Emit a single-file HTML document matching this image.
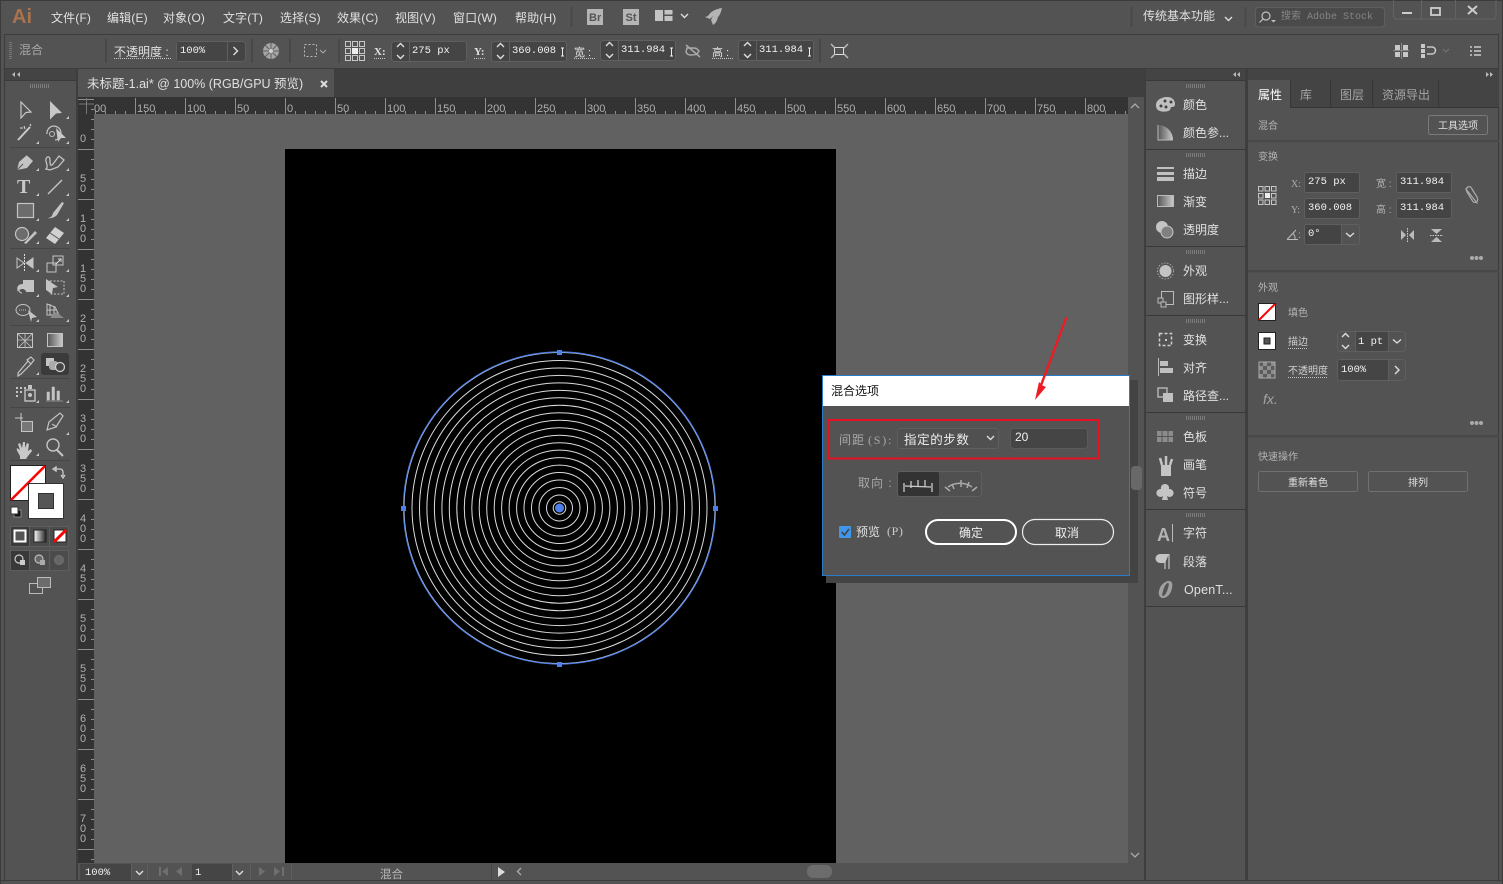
<!DOCTYPE html>
<html><head><meta charset="utf-8"><title>Illustrator</title>
<style>
html,body{margin:0;padding:0;background:#535353;width:1503px;height:884px;overflow:hidden}
svg{display:block;position:absolute;left:0;top:0}
text{font-family:"Liberation Sans","Noto Sans CJK SC",sans-serif;font-size:12px;fill:#e0e0e0}
.m{font-family:"Liberation Mono","Noto Sans CJK SC",monospace;font-size:10.5px;fill:#f2f2f2}
.s{font-size:10px;fill:#b4b4b4}
.g{fill:#a8a8a8}
.r{font-size:11px;fill:#b0b0b0}
.l{fill:none;stroke:#c0c0c0;stroke-width:1.2}
.b{fill:#444;stroke:#5f5f5f;stroke-width:1}
.d{stroke:#484848;stroke-width:2}
.sep{stroke:#464646;stroke-width:1}
.u{stroke:#c8c8c8;stroke-width:1;stroke-dasharray:1 1}
.ch{fill:none;stroke:#ddd;stroke-width:1.4}
.grip{stroke:#7c7c7c;stroke-width:5;stroke-dasharray:1 1;fill:none}
</style></head>
<body>
<svg width="1503" height="884" viewBox="0 0 1503 884" xmlns="http://www.w3.org/2000/svg">
<defs>
<pattern id="hr" x="85" y="97" width="50" height="17" patternUnits="userSpaceOnUse">
<path d="M.5 1V17M10.5 14V17M20.5 14V17M30.5 14V17M40.5 14V17" stroke="#8f8f8f" fill="none"/>
</pattern>
<pattern id="vr" x="78" y="99" width="16" height="50" patternUnits="userSpaceOnUse">
<path d="M0 .5H16M13 10.5H16M13 20.5H16M13 30.5H16M13 40.5H16" stroke="#8f8f8f" fill="none"/>
</pattern>
<pattern id="ck" x="1259" y="362" width="8" height="8" patternUnits="userSpaceOnUse">
<rect width="8" height="8" fill="#8e8e8e"/><rect width="4" height="4" fill="#5c5c5c"/><rect x="4" y="4" width="4" height="4" fill="#5c5c5c"/>
</pattern>
<linearGradient id="gr"><stop offset="0" stop-color="#555"/><stop offset="1" stop-color="#ccc"/></linearGradient>
<linearGradient id="gr2"><stop offset="0" stop-color="#fff"/><stop offset="1" stop-color="#222"/></linearGradient>
</defs>

<!-- base -->
<rect width="1503" height="884" fill="#535353"/>
<rect width="1503" height="1" fill="#3b3b3b"/>
<rect x="0" y="0" width="1" height="884" fill="#3b3b3b"/>
<rect x="1502" y="0" width="1" height="884" fill="#3b3b3b"/>
<rect x="4" y="34" width="1495" height="1" fill="#3c3c3c"/>
<rect x="4" y="68" width="1495" height="1" fill="#3c3c3c"/>
<rect x="4" y="34" width="1" height="846" fill="#3c3c3c"/>
<rect x="1498" y="34" width="1" height="846" fill="#3c3c3c"/>

<!-- title bar -->
<text x="12" y="23" style="font-size:20px;font-weight:bold;fill:#a8734e">Ai</text>
<text x="51" y="22" style="letter-spacing:.15px">文件(F)</text>
<text x="107" y="22" style="letter-spacing:.15px">编辑(E)</text>
<text x="163" y="22" style="letter-spacing:.15px">对象(O)</text>
<text x="223" y="22" style="letter-spacing:.15px">文字(T)</text>
<text x="280" y="22" style="letter-spacing:.15px">选择(S)</text>
<text x="337" y="22" style="letter-spacing:.15px">效果(C)</text>
<text x="395" y="22" style="letter-spacing:.15px">视图(V)</text>
<text x="453" y="22" style="letter-spacing:.15px">窗口(W)</text>
<text x="515" y="22" style="letter-spacing:.15px">帮助(H)</text>
<path d="M571.5 7V27" class="d"/>
<rect x="587" y="9" width="16" height="16" fill="#b5b5b5"/>
<text x="589" y="21" style="font-size:11px;font-weight:bold;fill:#555">Br</text>
<rect x="623" y="9" width="16" height="16" fill="#b5b5b5"/>
<text x="625.5" y="21" style="font-size:11px;font-weight:bold;fill:#555">St</text>
<path d="M655 10h8v11h-8zM664.5 10h8v4.5h-8zM664.5 16h8v5h-8z" fill="#c4c4c4"/>
<path d="M681 14l3.500 3.500 3.500-3.500" class="ch"/>
<path d="M722 8c-6 1-11 3-14 8l-3 1 5 2 3-3-2 4 2 5c3-2 4-4 5-8 2-2 3-5 4-9z" fill="#b4b4b4"/>
<path d="M1131.500 7V27M1245.500 7V27" class="d"/>
<text x="1143" y="20">传统基本功能</text>
<path d="M1225 17l3.500 3.500 3.500-3.500" class="ch"/>
<rect x="1255.5" y="7.5" width="129" height="19.5" rx="3" fill="#4a4a4a" stroke="#5f5f5f"/>
<circle cx="1266" cy="16" r="4" class="l"/><path d="M1263 19l-3.500 3.500" class="l"/><path d="M1271 20h5l-2.500 2.500z" fill="#c0c0c0"/>
<text x="1281" y="19" style="font-family:'Liberation Mono','Noto Sans CJK SC',monospace;font-size:10px;fill:#858585">搜索 Adobe Stock</text>
<path d="M1393.5 0V16a3 3 0 0 0 3 3H1493a3 3 0 0 0 3-3V0M1421.500 0V19M1455.500 0V19" fill="none" stroke="#636363"/>
<rect x="1402" y="12" width="10" height="2" fill="#ccc"/>
<rect x="1431" y="8" width="9" height="7" fill="none" stroke="#ccc" stroke-width="1.8"/>
<path d="M1468 6l9 8M1477 6l-9 8" stroke="#ccc" stroke-width="2"/>

<!-- control bar -->
<path d="M10.5 42V60" stroke="#777" stroke-width="3" stroke-dasharray="1 1"/>
<text x="19" y="54" class="g">混合</text>
<path d="M106 39V63M252 39V63M290 39V63M339 39V63M820 39V63" class="d"/>
<text x="114" y="56">不透明度 :</text><path d="M114 58.5H171" class="u"/>
<rect x="176.5" y="41.5" width="69" height="20" rx="3" class="b"/><rect x="177" y="42" width="50" height="19" fill="#454545"/>
<path d="M227.5 42V61" stroke="#5f5f5f"/><text x="180" y="53" class="m">100%</text>
<path d="M233.5 47l4 4-4 4" class="ch"/>
<circle cx="271" cy="51" r="8" fill="#a5a5a5"/><path d="M271 43V59M263 51H279M265 45l12 12M277 45l-12 12" stroke="#5f5f5f"/><circle cx="271" cy="51" r="2" fill="#d0d0d0"/>
<rect x="304.5" y="44.5" width="12" height="12" fill="none" stroke="#bbb" stroke-dasharray="2 2"/>
<path d="M320 50l3 3 3-3" fill="none" stroke="#aaa"/>
<g fill="none" stroke="#c8c8c8"><rect x="345.5" y="41.5" width="5" height="5"/><rect x="352.5" y="41.5" width="5" height="5"/><rect x="359.5" y="41.5" width="5" height="5"/><rect x="345.5" y="48.5" width="5" height="5"/><rect x="359.5" y="48.5" width="5" height="5"/><rect x="345.5" y="55.5" width="5" height="5"/><rect x="352.5" y="55.5" width="5" height="5"/><rect x="359.5" y="55.5" width="5" height="5"/></g><rect x="352" y="48" width="6" height="6" fill="#eee"/>
<text x="374" y="55" style="font-family:'Liberation Serif';font-weight:bold;font-size:11px">X:</text><path d="M374 58.5H385" class="u"/>
<text x="474" y="55" style="font-family:'Liberation Serif';font-weight:bold;font-size:11px">Y:</text><path d="M474 58.5H485" class="u"/>
<text x="574" y="56" style="font-size:11px">宽 :</text><path d="M574 58.5H595" class="u"/>
<text x="712" y="56" style="font-size:11px">高 :</text><path d="M712 58.5H733" class="u"/>

<rect x="391.5" y="41.5" width="75" height="20" rx="3" class="b"/><rect x="409.5" y="42" width="56" height="19" fill="#454545"/><path d="M409.5 42V61" stroke="#5f5f5f"/>
<path d="M397 47l3.500-3.500 3.500 3.500M397 55l3.500 3.500 3.500-3.500" class="ch"/><text x="412" y="53" class="m">275 px</text>
<rect x="491.5" y="41.5" width="75" height="20" rx="3" class="b"/><rect x="509.5" y="42" width="56" height="19" fill="#454545"/><path d="M509.5 42V61" stroke="#5f5f5f"/>
<path d="M497 47l3.500-3.500 3.500 3.500M497 55l3.500 3.500 3.500-3.500" class="ch"/><text x="512" y="53" class="m">360.008</text>
<path d="M562.5 48V56M561 48h3M561 56h3" stroke="#eee"/>
<rect x="600.5" y="40.5" width="75" height="20" rx="3" class="b"/><rect x="618.5" y="41" width="56" height="19" fill="#454545"/><path d="M618.5 41V60" stroke="#5f5f5f"/>
<path d="M606 46l3.500-3.500 3.500 3.500M606 54l3.500 3.500 3.500-3.500" class="ch"/><text x="621" y="52" class="m">311.984</text>
<path d="M671.5 48V56M670 48h3M670 56h3" stroke="#eee"/>
<rect x="738.5" y="40.5" width="75" height="20" rx="3" class="b"/><rect x="756.5" y="41" width="56" height="19" fill="#454545"/><path d="M756.5 41V60" stroke="#5f5f5f"/>
<path d="M744 46l3.500-3.500 3.500 3.500M744 54l3.500 3.500 3.500-3.500" class="ch"/><text x="759" y="52" class="m">311.984</text>
<path d="M809.5 48V56M808 48h3M808 56h3" stroke="#eee"/>
<path d="M687 48h5c3 0 4 0 5 1l2 2-2 3c-2 1-3 1-6 1-3 0-4-1-5-3zM686 45l14 12" fill="none" stroke="#aaa" stroke-width="1.500"/>
<rect x="834.5" y="47.5" width="9" height="7" fill="none" stroke="#ddd"/>
<path d="M831 44l4 4M848 44l-4 4M831 58l4-4M848 58l-4-4" stroke="#bbb" stroke-width="1.500"/>
<path d="M1395 45h5v5h-5zM1403 45h5v5h-5zM1395 52h5v5h-5zM1403 52h5v5h-5z" fill="#c8c8c8"/><path d="M1401.5 43V59M1393 50.5H1409" stroke="#888"/>
<path d="M1421 44h4v4h-4zM1421 49h4v4h-4zM1421 54h4v4h-4z" fill="#c8c8c8"/><path d="M1427 47h5a3 3 0 0 1 0 7h-5" fill="none" stroke="#c8c8c8" stroke-width="1.500"/>
<path d="M1443 49l3 3 3-3" fill="none" stroke="#777"/>
<path d="M1470 47h2M1470 51h2M1470 55h2M1474 47h7M1474 51h7M1474 55h7" stroke="#ccc" stroke-width="1.500"/>

<!-- tab row -->
<rect x="5" y="69" width="71" height="12" fill="#444"/>
<rect x="78" y="69" width="1066" height="28" fill="#3f3f3f"/>
<rect x="78" y="69" width="256" height="28" fill="#535353"/>
<text x="87" y="88" style="font-size:12.5px">未标题-1.ai* @ 100% (RGB/GPU 预览)</text>
<path d="M321 81l6 6M327 81l-6 6" stroke="#ddd" stroke-width="2"/>
<path d="M15 72l-3 2.500 3 2.500zM20 72l-3 2.500 3 2.500z" fill="#bbb"/>
<rect x="4" y="80" width="72" height="1" fill="#3a3a3a"/>
<rect x="76" y="69" width="2" height="811" fill="#3e3e3e"/>

<!-- canvas -->
<rect x="94" y="114" width="1034" height="749" fill="#616161"/>
<rect x="285" y="149" width="551" height="714" fill="#000"/>

<!-- rulers -->
<rect x="78" y="97" width="1050" height="17" fill="#333"/>
<rect x="94" y="97" width="1034" height="17" fill="url(#hr)"/>
<rect x="78" y="97" width="16" height="766" fill="#333"/>
<rect x="78" y="99" width="16" height="764" fill="url(#vr)"/>
<path d="M79 104H94M86.5 98V114" stroke="#777"/>
<text class="r" x="94" y="112">00</text><text class="r" x="137" y="112">150</text><text class="r" x="187" y="112">100</text><text class="r" x="237" y="112">50</text><text class="r" x="287" y="112">0</text><text class="r" x="337" y="112">50</text><text class="r" x="387" y="112">100</text><text class="r" x="437" y="112">150</text><text class="r" x="487" y="112">200</text><text class="r" x="537" y="112">250</text><text class="r" x="587" y="112">300</text><text class="r" x="637" y="112">350</text><text class="r" x="687" y="112">400</text><text class="r" x="737" y="112">450</text><text class="r" x="787" y="112">500</text><text class="r" x="837" y="112">550</text><text class="r" x="887" y="112">600</text><text class="r" x="937" y="112">650</text><text class="r" x="987" y="112">700</text><text class="r" x="1037" y="112">750</text><text class="r" x="1087" y="112">800</text>
<text class="r" x="80" y="142">0</text>
<text class="r" x="80 80" y="182 192">50</text>
<text class="r" x="80 80 80" y="222 232 242">100</text>
<text class="r" x="80 80 80" y="272 282 292">150</text>
<text class="r" x="80 80 80" y="322 332 342">200</text>
<text class="r" x="80 80 80" y="372 382 392">250</text>
<text class="r" x="80 80 80" y="422 432 442">300</text>
<text class="r" x="80 80 80" y="472 482 492">350</text>
<text class="r" x="80 80 80" y="522 532 542">400</text>
<text class="r" x="80 80 80" y="572 582 592">450</text>
<text class="r" x="80 80 80" y="622 632 642">500</text>
<text class="r" x="80 80 80" y="672 682 692">550</text>
<text class="r" x="80 80 80" y="722 732 742">600</text>
<text class="r" x="80 80 80" y="772 782 792">650</text>
<text class="r" x="80 80 80" y="822 832 842">700</text>

<!-- rings -->
<g fill="none" stroke="#dcdcdc" stroke-width="1">
<circle cx="559.5" cy="508" r="155.500"/>
<circle cx="559.5" cy="508" r="147.500"/><circle cx="559.5" cy="508" r="140"/><circle cx="559.5" cy="508" r="132.600"/><circle cx="559.5" cy="508" r="125.100"/><circle cx="559.5" cy="508" r="117.600"/><circle cx="559.5" cy="508" r="110.200"/><circle cx="559.5" cy="508" r="102.700"/><circle cx="559.5" cy="508" r="95.200"/><circle cx="559.5" cy="508" r="87.700"/><circle cx="559.5" cy="508" r="80.300"/><circle cx="559.5" cy="508" r="72.800"/><circle cx="559.5" cy="508" r="65.300"/><circle cx="559.5" cy="508" r="57.900"/><circle cx="559.5" cy="508" r="50.400"/><circle cx="559.5" cy="508" r="42.900"/><circle cx="559.5" cy="508" r="35.500"/><circle cx="559.5" cy="508" r="28"/><circle cx="559.5" cy="508" r="20.500"/><circle cx="559.5" cy="508" r="13"/><circle cx="559.5" cy="508" r="6.300"/>
</g>
<circle cx="559.5" cy="508" r="156" fill="none" stroke="#4f80e8" stroke-width="1.200"/>
<circle cx="559.5" cy="508" r="4.500" fill="#4f80e8"/>
<g fill="#4f80e8"><rect x="557" y="350" width="5" height="5"/><rect x="557" y="662" width="5" height="5"/><rect x="401" y="506" width="5" height="5"/><rect x="713" y="506" width="5" height="5"/></g>

<!-- scroll v -->
<rect x="1128" y="97" width="16" height="766" fill="#535353"/>
<path d="M1131 108l4-4 4 4M1131 853l4 4 4-4" fill="none" stroke="#aaa" stroke-width="1.300"/>
<rect x="1144" y="69" width="2" height="811" fill="#3e3e3e"/>

<!-- tools panel -->
<path d="M30 86H49" class="grip" style="stroke-width:4"/>
<path d="M10 147.5H70M10 248.5H70M10 325.5H70M10 378.5H70M10 407.5H70M10 460.5H70" class="sep"/>
<path d="M21 102l10 10-5 .5-5 5.500z" fill="none" stroke="#c8c8c8" stroke-width="1.200"/>
<path d="M50 101l12 12-6 .5-6 6z" fill="#c8c8c8"/>
<path d="M18 140l12-13" stroke="#c8c8c8" stroke-width="2"/><path d="M24 126l1 3M20 128h3M30 124l1 2" stroke="#ddd"/>
<path d="M47 134a7 7 0 1 1 8 6" fill="none" stroke="#c0c0c0" stroke-width="1.300"/><path d="M56 128l10 10-5 0-3 4z" fill="#c8c8c8"/><circle cx="52" cy="134" r="2.500" fill="none" stroke="#c0c0c0"/>
<path d="M17 170l2-8 8-7 6 6-6 7z" fill="#c4c4c4"/><path d="M17 170l6-6" stroke="#555"/><path d="M26 154l7 6" stroke="#535353"/>
<path d="M46 169c3-3-1-7 0-10s4-3 4 1 0 7 3 4l6-8 5 4-6 7-8 3z" fill="none" stroke="#c4c4c4" stroke-width="1.300"/>
<text x="17" y="193" style="font-family:'Liberation Serif';font-size:20px;font-weight:bold;fill:#c8c8c8">T</text>
<path d="M48 194l14-14" stroke="#c4c4c4" stroke-width="1.400"/>
<rect x="17.5" y="203.5" width="16" height="14" fill="#6c6c6c" stroke="#c4c4c4" stroke-width="1.200"/>
<path d="M47 218c3 0 5-1 6-5l9-11 2 1-7 12c-2 2-6 4-10 3z" fill="#c4c4c4"/>
<circle cx="22" cy="234" r="6.500" fill="#6c6c6c" stroke="#c4c4c4" stroke-width="1.200"/><path d="M24 243l11-12 2 2-11 11z" fill="#c4c4c4"/>
<path d="M46 238l9-11 9 6-9 11z" fill="#d0d0d0"/><path d="M50 233l9 6" stroke="#555"/>
<path d="M17 258l7 5-7 5zM33 258l-7 5 7 5z" fill="none" stroke="#c4c4c4"/><path d="M33 258v10l-7-5z" fill="#c4c4c4"/><path d="M24.5 254v18" stroke="#ddd" stroke-dasharray="2 1"/>
<rect x="47" y="263" width="9" height="9" fill="none" stroke="#c4c4c4"/><rect x="53" y="256" width="10" height="9" fill="none" stroke="#c4c4c4"/><path d="M56 264l5-5M58 259h3v3" stroke="#ddd"/>
<path d="M23 280h11v12H26c0-4-7-4-8 0-2-5 0-8 5-8z" fill="#c4c4c4"/><path d="M22 293a3 3 0 1 1 3-3" fill="none" stroke="#c4c4c4"/>
<rect x="50" y="281" width="14" height="13" fill="none" stroke="#c4c4c4" stroke-dasharray="2 1.500"/><path d="M46 279l12 8-5 1-1 6-6-4z" fill="#c4c4c4"/>
<ellipse cx="23" cy="310" rx="7" ry="5.500" fill="none" stroke="#c4c4c4"/><path d="M28 310l9 7-5 1-1 4z" fill="#c4c4c4"/><path d="M19 310h7" stroke="#c4c4c4" stroke-dasharray="1 1"/>
<path d="M47 304l8 3 4 8H47zM50 304v11M54 306v9M47 310h10" fill="none" stroke="#c4c4c4"/><path d="M50 318l6-6 8 6z" fill="#8a8a8a"/>
<rect x="17.5" y="333.5" width="15" height="14" fill="none" stroke="#c4c4c4"/><path d="M18 340h14M25 334v14M18 334l14 14M32 334l-14 14" stroke="#c4c4c4" stroke-width=".8"/>
<rect x="47.5" y="333.5" width="15" height="13" fill="url(#gr)" stroke="#c4c4c4"/>
<rect x="41" y="353" width="28" height="22" rx="3" fill="#3b3b3b"/>
<path d="M18 373l10-12 3 3-10 10-3 2zM27 360l4-3 3 3-3 4z" fill="none" stroke="#c4c4c4" stroke-width="1.200"/>
<rect x="46" y="358" width="8" height="8" fill="#c4c4c4"/><rect x="49" y="361" width="9" height="9" rx="3" fill="#aaa"/><circle cx="60" cy="367" r="4.500" fill="#444" stroke="#ccc" stroke-width="1.300"/>
<path d="M16 387h2v2h-2zM20 387h2v2h-2zM24 387h2v2h-2zM16 391h2v2h-2zM20 391h2v2h-2zM16 395h2v2h-2z" fill="#c4c4c4"/><rect x="25" y="390" width="10" height="11" fill="none" stroke="#c4c4c4" stroke-width="1.400"/><rect x="28" y="385" width="4" height="4" fill="#c4c4c4"/><circle cx="30" cy="395" r="2" fill="#c4c4c4"/>
<path d="M47 400v-8h2.500v8zM52 400v-13h2.500v13zM57 400v-9h2.500v9zM46 401H63" fill="#c4c4c4" stroke="#c4c4c4" stroke-width=".5"/>
<rect x="21.5" y="421.5" width="11" height="10" fill="#777" stroke="#c4c4c4"/><path d="M15 418h8M21 413v8" stroke="#c4c4c4"/>
<path d="M47 430l2-8 11-9 3 3-7 11zM52 424l5 3" fill="none" stroke="#c4c4c4" stroke-width="1.200"/>
<path d="M20 456c-2-4-4-6-3-8l3 2-2-6 2-1 2 5 1-6h2l0 6 2-5 2 1-1 7 3-2 1 2-4 5-2 3h-6z" fill="#c8c8c8"/>
<circle cx="53" cy="445" r="6" fill="none" stroke="#c4c4c4" stroke-width="1.400"/><path d="M57 450l6 6" stroke="#c4c4c4" stroke-width="2"/>
<path fill="#c8c8c8" d="M66 119h3v-3zM36 144h3v-3zM66 144h3v-3zM36 171h3v-3zM66 171h3v-3zM36 196h3v-3zM66 196h3v-3zM36 221h3v-3zM66 221h3v-3zM36 244h3v-3zM66 244h3v-3zM36 272h3v-3zM66 272h3v-3zM36 297h3v-3zM66 297h3v-3zM36 322h3v-3zM66 322h3v-3zM36 375h3v-3zM36 403h3v-3zM66 403h3v-3zM66 435h3v-3zM36 456h3v-3z"/>

<!-- colour swatches -->
<rect x="10.5" y="465.5" width="35" height="35" fill="#fff" stroke="#222"/>
<path d="M11 500L45 466" stroke="#f00" stroke-width="2.500"/>
<rect x="28.5" y="483.5" width="35" height="35" fill="#fff" stroke="#333"/>
<rect x="38.5" y="493.500" width="15" height="15" fill="#565656" stroke="#333"/>
<path d="M55 469h5a3 3 0 0 1 3 3v4M53 469l3-2v4zM61 475l2 3 2-3" fill="none" stroke="#ccc" stroke-width="1.300"/>
<rect x="14" y="510" width="7" height="7" fill="#111" stroke="#888"/><rect x="11" y="507" width="7" height="7" fill="#fff" stroke="#333"/>
<rect x="10.5" y="526.500" width="58" height="20" fill="#4b4b4b" stroke="#5e5e5e"/><rect x="11" y="527" width="18" height="19" fill="#3a3a3a"/>
<rect x="14.5" y="530.500" width="11" height="11" fill="#555" stroke="#fff" stroke-width="2"/>
<rect x="34" y="530" width="12" height="12" fill="url(#gr2)" stroke="#222"/>
<rect x="54" y="530" width="12" height="12" fill="#fff" stroke="#222"/><path d="M54 542l12-12" stroke="#f00" stroke-width="3"/>
<path d="M29.5 527V546M49.5 527V546" stroke="#5e5e5e"/>
<rect x="10.5" y="550.500" width="58" height="20" fill="#4b4b4b" stroke="#5e5e5e"/><rect x="11" y="551" width="18" height="19" fill="#393939"/>
<circle cx="19" cy="559" r="4" fill="none" stroke="#ccc" stroke-width="1.200"/><rect x="20" y="560" width="5" height="5" fill="#ccc"/>
<circle cx="39" cy="559" r="4" fill="#666" stroke="#bbb" stroke-width="1.200"/><rect x="40" y="560" width="5" height="5" fill="#aaa"/>
<circle cx="59" cy="560" r="4.500" fill="#666" stroke="#707070"/>
<path d="M29.5 551V570M49.5 551V570" stroke="#5e5e5e"/>
<rect x="29.5" y="583.500" width="13" height="10" fill="none" stroke="#bbb"/><rect x="37.5" y="577.500" width="13" height="10" fill="#6c6c6c" stroke="#bbb"/>

<!-- status bar -->
<rect x="78" y="863" width="1066" height="17" fill="#535353"/>
<rect x="80" y="864" width="52" height="16" fill="#454545"/>
<text x="85" y="875" class="m">100%</text>
<path d="M136 871l3.500 3.500 3.500-3.500" class="ch"/>
<path d="M131.5 864V880M147.5 864V880M192.5 864V880M232.5 864V880M250.5 864V880M291.5 864V880" stroke="#5f5f5f"/>
<path d="M159 867v9h2v-9zM168 867l-6 4.500 6 4.500zM182 867l-6 4.500 6 4.500z" fill="#6f6f6f"/>
<rect x="192" y="864" width="40" height="16" fill="#454545"/>
<text x="195" y="875" class="m">1</text>
<path d="M236 871l3.500 3.500 3.500-3.500" class="ch"/>
<path d="M259 867l6 4.500-6 4.500zM274 867l6 4.500-6 4.500zM282 867v9h2v-9z" fill="#6f6f6f"/>
<text x="380" y="878" style="font-size:11.500px;fill:#b8b8b8">混合</text>
<rect x="491" y="864" width="1" height="16" fill="#464646"/>
<path d="M498 867l7 5-7 5z" fill="#ddd"/>
<path d="M521 868l-3.500 3.500 3.500 3.500" fill="none" stroke="#aaa" stroke-width="1.300"/>
<rect x="807" y="865" width="25" height="13" rx="6" fill="#6c6c6c"/>
<rect x="0" y="880" width="1503" height="1" fill="#3c3c3c"/>

<!-- dock -->
<rect x="1146" y="69" width="353" height="11" fill="#444"/>
<path d="M1236 72l-3 2.500 3 2.500zM1240 72l-3 2.500 3 2.500z" fill="#bbb"/>
<path d="M1486 72l3 2.500-3 2.500zM1490 72l3 2.500-3 2.500z" fill="#bbb"/>
<rect x="1146" y="80" width="100" height="800" fill="#535353"/>
<rect x="1245" y="69" width="3" height="811" fill="#3e3e3e"/>
<path d="M1146 80.5H1245M1146 149.5H1245M1146 246.5H1245M1146 315.5H1245M1146 412.5H1245M1146 509.5H1245M1146 606.5H1245" stroke="#383838"/>
<path d="M1186 86H1205M1186 155H1205M1186 252H1205M1186 321H1205M1186 418H1205M1186 515H1205" class="grip" style="stroke-width:4"/>
<text x="1183" y="109">颜色</text><text x="1183" y="137">颜色参...</text><text x="1183" y="178">描边</text><text x="1183" y="206">渐变</text><text x="1183" y="234">透明度</text><text x="1183" y="275">外观</text><text x="1183" y="303">图形样...</text><text x="1183" y="344">变换</text><text x="1183" y="372">对齐</text><text x="1183" y="400">路径查...</text><text x="1183" y="441">色板</text><text x="1183" y="469">画笔</text><text x="1183" y="497">符号</text><text x="1183" y="537">字符</text><text x="1183" y="566">段落</text><text x="1184" y="594" style="font-size:12.5px;letter-spacing:.2px">OpenT...</text>
<path d="M1156 105c0-5 6-8 11-8 5 0 8 3 8 7 0 3-2 3-4 3l-1 3c-2 2-8 2-10 1-3-1-4-3-4-6z" fill="#c0c0c0"/><circle cx="1161" cy="106" r="1.500" fill="#444"/><circle cx="1166" cy="107" r="1.500" fill="#444"/><circle cx="1165" cy="101" r="1.500" fill="#444"/><circle cx="1171" cy="102" r="1.500" fill="#444"/>
<path d="M1158 125a15 15 0 0 1 15 15h-15z" fill="url(#gr)"/><path d="M1158 125v15h15" fill="none" stroke="#bbb"/>
<path d="M1157 167h17v2h-17zM1157 172h17v3h-17zM1157 177h17v4h-17z" fill="#c0c0c0"/>
<rect x="1157.5" y="195.500" width="16" height="11" fill="url(#gr)" stroke="#bbb"/>
<circle cx="1162" cy="227" r="6" fill="#c4c4c4"/><circle cx="1167" cy="232" r="6" fill="#808080" stroke="#c4c4c4"/>
<circle cx="1165.5" cy="271" r="8" fill="none" stroke="#aaa" stroke-dasharray="1.500 1.500"/><circle cx="1165.5" cy="271" r="6" fill="#c4c4c4"/>
<rect x="1161.5" y="291.500" width="12" height="13" fill="none" stroke="#bbb"/><rect x="1158" y="298" width="5" height="5" fill="#535353" stroke="#bbb"/><rect x="1161" y="302" width="5" height="5" fill="#535353" stroke="#bbb"/>
<rect x="1159.5" y="333.500" width="12" height="12" fill="none" stroke="#d0d0d0" stroke-width="1.500" stroke-dasharray="3 2"/><rect x="1165" y="339" width="2" height="2" fill="#ccc"/>
<path d="M1158.5 358V376" stroke="#bbb"/><path d="M1160 361h8v5h-8zM1160 368h13v5h-13z" fill="#c0c0c0"/>
<rect x="1158" y="388" width="9" height="9" fill="none" stroke="#c0c0c0" stroke-width="1.300"/><rect x="1163" y="393" width="10" height="9" fill="#c0c0c0"/>
<path d="M1157 431h16v11h-16z" fill="#8c8c8c"/><path d="M1162 431v11M1168 431v11M1157 436.5h16" stroke="#535353"/>
<path d="M1161 465h10v11h-10z" fill="#c4c4c4"/><path d="M1162 465l-2-7M1166 465v-9M1170 465l2-6" fill="none" stroke="#c4c4c4" stroke-width="2.500"/>
<path d="M1165 484a4 4 0 0 1 4 5 4 4 0 1 1-2 7l1 4h-6l1-4a4 4 0 1 1-2-7 4 4 0 0 1 4-5z" fill="#c4c4c4"/>
<text x="1157" y="541" style="font-size:18px;font-weight:bold;fill:#b4b4b4">A</text><path d="M1172.5 524V542" stroke="#bbb"/>
<path d="M1165 554v15M1169 554v15" stroke="#bbb" stroke-width="1.300"/><path d="M1169 554h-9a4 4 0 0 0 0 9h5z" fill="#c4c4c4"/>
<path fill-rule="evenodd" d="M1169 581c3 0 4 3 3 7-1 6-5 10-9 10-3 0-5-3-4-7 1-6 6-10 10-10zM1168 583c-2 0-4 4-5 8-1 3-1 5 0 5 2 0 4-4 5-8 1-3 1-5 0-5z" fill="#a0a0a0"/>

<!-- right panel -->
<rect x="1248" y="80" width="251" height="28" fill="#444"/>
<rect x="1248" y="80" width="42" height="28" fill="#535353"/>
<path d="M1290.5 80V108M1330.5 80V107M1372.5 80V107M1438.5 80V107" stroke="#363636"/>
<path d="M1290 107.5H1499" stroke="#363636"/>
<text x="1258" y="99" style="fill:#fff">属性</text>
<text x="1300" y="99" style="fill:#a5a5a5">库</text>
<text x="1340" y="99" style="fill:#a5a5a5">图层</text>
<text x="1382" y="99" style="fill:#a5a5a5">资源导出</text>
<text x="1258" y="129" class="s">混合</text>
<rect x="1428.5" y="115.500" width="59" height="19" rx="2" fill="none" stroke="#7a7a7a"/>
<text x="1438" y="129" class="s" style="fill:#e0e0e0">工具选项</text>
<rect x="1248" y="140" width="251" height="2" fill="#484848"/>
<text x="1258" y="160" class="s">变换</text>
<g fill="none" stroke="#c8c8c8"><rect x="1258.5" y="186.500" width="4.500" height="4.500"/><rect x="1265" y="186.500" width="4.500" height="4.500"/><rect x="1271.5" y="186.500" width="4.500" height="4.500"/><rect x="1258.5" y="193.500" width="4.500" height="4.500"/><rect x="1271.5" y="193.500" width="4.500" height="4.500"/><rect x="1258.5" y="200" width="4.500" height="4.500"/><rect x="1265" y="200" width="4.500" height="4.500"/><rect x="1271.5" y="200" width="4.500" height="4.500"/></g><rect x="1265" y="193" width="5" height="5" fill="#eee"/>
<text x="1291" y="187" style="font-family:'Liberation Serif';font-size:10px;fill:#aaa">X:</text>
<text x="1291" y="213" style="font-family:'Liberation Serif';font-size:10px;fill:#aaa">Y:</text>
<text x="1376" y="187" class="s">宽 :</text>
<text x="1376" y="213" class="s">高 :</text>
<rect x="1304.5" y="172.500" width="55" height="20" rx="2" class="b"/><text x="1308" y="184" class="m">275 px</text>
<rect x="1304.5" y="198.500" width="55" height="20" rx="2" class="b"/><text x="1308" y="210" class="m">360.008</text>
<rect x="1396.5" y="172.500" width="55" height="20" rx="2" class="b"/><text x="1400" y="184" class="m">311.984</text>
<rect x="1396.5" y="198.500" width="55" height="20" rx="2" class="b"/><text x="1400" y="210" class="m">311.984</text>
<path d="M1287 239.500H1298M1287 239.500L1296 230M1293 233.500a7 7 0 0 1 2 6" fill="none" stroke="#bbb"/><text x="1298" y="238" class="s">:</text>
<rect x="1304.5" y="224.500" width="55" height="20" rx="2" class="b"/><path d="M1341.5 225V244" stroke="#5f5f5f"/><rect x="1342" y="225" width="17" height="19" fill="#535353"/>
<text x="1308" y="236" class="m">0°</text><path d="M1346 233l4 3.500 4-3.500" class="ch"/>
<path d="M1465.5 188.500l12 15M1468 187c2-1 3 0 4 2l5 8c1 2 1 4-1 5s-3 0-4-2l-5-8c-1-2-1-4 1-5z" fill="none" stroke="#a8a8a8" stroke-width="1.300"/>
<path d="M1401 230l5 5-5 5zM1414 230l-5 5 5 5z" fill="#bbb"/><path d="M1407.5 228V242" stroke="#ccc" stroke-dasharray="1.500 1"/>
<path d="M1431 229h11l-5.500 5zM1431 242h11l-5.500-5z" fill="#bbb"/><path d="M1430 235.500H1443" stroke="#ccc" stroke-dasharray="1.500 1"/>
<circle cx="1472" cy="258" r="2" fill="#aaa"/><circle cx="1476.5" cy="258" r="2" fill="#aaa"/><circle cx="1481" cy="258" r="2" fill="#aaa"/>
<rect x="1248" y="270" width="251" height="2.500" fill="#484848"/>
<text x="1258" y="291" class="s">外观</text>
<rect x="1258.5" y="303.500" width="17" height="17" fill="#fff" stroke="#222"/><path d="M1259 320l16-16" stroke="#f00" stroke-width="2"/>
<text x="1288" y="316" class="s">填色</text>
<rect x="1258.5" y="332.500" width="17" height="17" fill="#fff" stroke="#222"/><rect x="1264" y="338" width="6" height="6" fill="#555" stroke="#222"/>
<text x="1288" y="345" class="s" style="fill:#d0d0d0">描边</text><path d="M1288 348.5H1308" class="u"/>
<rect x="1337.5" y="331.500" width="68" height="20" rx="3" fill="#535353" stroke="#5f5f5f"/><rect x="1355" y="332" width="33" height="19" fill="#454545"/><path d="M1355.5 332V351M1388.5 332V351" stroke="#5f5f5f"/>
<path d="M1342 337l3.500-3.500 3.500 3.500M1342 345l3.500 3.500 3.500-3.500" class="ch"/><text x="1358" y="344" class="m">1 pt</text>
<path d="M1393 339.5l4 3.500 4-3.500" class="ch"/>
<rect x="1259" y="362" width="16" height="16" fill="url(#ck)" stroke="#aaa"/>
<text x="1288" y="374" class="s" style="fill:#d0d0d0">不透明度</text><path d="M1288 377.5H1328" class="u"/>
<rect x="1337.5" y="359.500" width="68" height="21" rx="3" fill="#535353" stroke="#5f5f5f"/><rect x="1338" y="360" width="50" height="20" rx="2" fill="#454545"/><path d="M1388.5 360V380" stroke="#5f5f5f"/>
<text x="1341" y="372" class="m">100%</text><path d="M1395 366l4 4-4 4" class="ch"/>
<text x="1263" y="404" style="font-family:'Liberation Sans';font-style:italic;font-size:14px;fill:#a5a5a5">fx.</text>
<circle cx="1472" cy="423" r="2" fill="#aaa"/><circle cx="1476.5" cy="423" r="2" fill="#aaa"/><circle cx="1481" cy="423" r="2" fill="#aaa"/>
<rect x="1248" y="435" width="251" height="2.500" fill="#484848"/>
<text x="1258" y="460" class="s">快速操作</text>
<rect x="1258.5" y="471.500" width="99" height="20" rx="2" fill="none" stroke="#707070"/>
<rect x="1368.5" y="471.500" width="99" height="20" rx="2" fill="none" stroke="#707070"/>
<text x="1288" y="486" class="s" style="fill:#e0e0e0">重新着色</text>
<text x="1408" y="486" class="s" style="fill:#e0e0e0">排列</text>

<!-- dialog -->
<rect x="826" y="380" width="312" height="203" fill="#434343"/>
<rect x="1131" y="466" width="11" height="24" rx="4" fill="#686868"/>
<rect x="822.5" y="375.500" width="307" height="200" fill="#535353" stroke="#2a7cc8"/>
<rect x="823" y="376" width="306" height="30" fill="#fff"/>
<text x="831" y="395" style="fill:#111">混合选项</text>
<path d="M1066.5 317L1040 388" stroke="#ed1c24" stroke-width="2.400" fill="none"/>
<path d="M1035 400l4-18 3.500 3.500 3.500 1.500z" fill="#ed1c24"/>
<rect x="828.5" y="420" width="269.500" height="38.500" fill="none" stroke="#e81123" stroke-width="2"/>
<text x="839" y="444" style="fill:#a8a8a8;letter-spacing:1px">间距</text><text x="868" y="444" style="font-family:'Liberation Serif','Noto Sans CJK SC';fill:#a8a8a8;letter-spacing:1.800px">(S):</text>
<rect x="897.5" y="428.500" width="101" height="20" rx="3" fill="#505050" stroke="#5f5f5f"/>
<text x="904" y="444" style="font-size:12.5px;fill:#eee;letter-spacing:.6px">指定的步数</text>
<path d="M987 436l3.500 3.500 3.500-3.500" class="ch"/>
<rect x="1010.5" y="428.500" width="77" height="20" rx="3" fill="#454545" stroke="#5a5a5a"/>
<text x="1015" y="441" style="font-size:12px;fill:#f2f2f2">20</text>
<text x="858" y="487" style="fill:#a8a8a8;letter-spacing:1px">取向 :</text>
<rect x="897.5" y="471.500" width="84" height="25" rx="3" fill="#505050" stroke="#5f5f5f"/>
<rect x="898" y="472" width="41" height="24" rx="2" fill="#333"/>
<path d="M904 483v9M932 483v9M905 486l26 1M911 481v7M918 480v7M925 480v7" fill="none" stroke="#ccc" stroke-width="1.300"/>
<path d="M945 487l5 4M977 487l-5 4M948 487c7-5 17-5 24 0M952 484l2 5M961 480v7M969 482l-2 6" fill="none" stroke="#aaa" stroke-width="1.500"/>
<rect x="839" y="526" width="12" height="12" rx="1" fill="#3f96ea"/>
<path d="M841.5 532l3 3 4.500-6" fill="none" stroke="#444" stroke-width="1.600"/>
<text x="856" y="536" style="fill:#e0e0e0">预览</text><text x="887" y="535" style="font-family:'Liberation Serif';fill:#ccc;letter-spacing:.6px">(P)</text>
<rect x="926" y="520" width="90" height="24" rx="12" fill="none" stroke="#fff" stroke-width="2"/>
<text x="959" y="537" style="fill:#eee">确定</text>
<rect x="1022.5" y="519.500" width="91" height="25" rx="12.500" fill="none" stroke="#eee" stroke-width="1.200"/>
<text x="1055" y="537" style="fill:#eee">取消</text>
</svg>
</body></html>
